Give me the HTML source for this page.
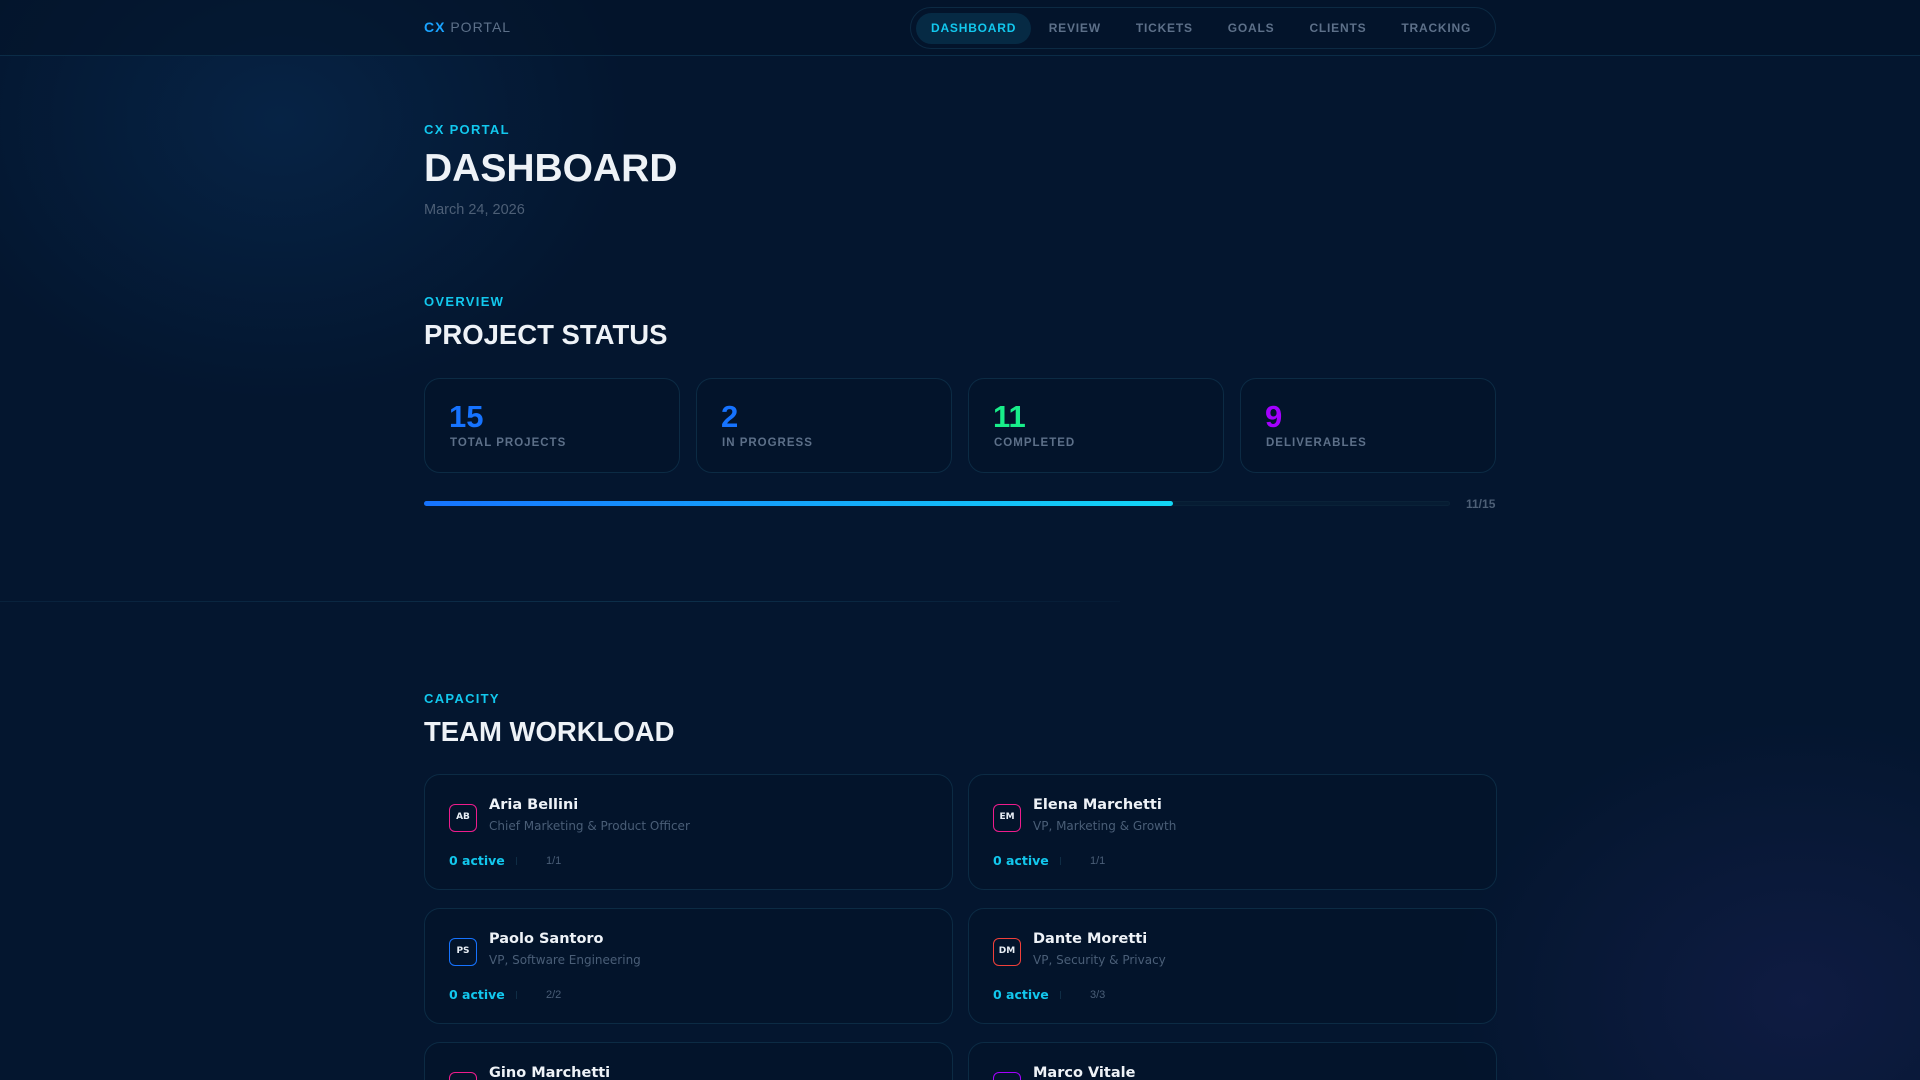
<!DOCTYPE html>
<html><head><meta charset="utf-8"><style>
*{margin:0;padding:0;box-sizing:border-box}
html,body{width:1920px;height:1080px;overflow:hidden}
body{font-family:"Liberation Sans",sans-serif;position:relative;
background:radial-gradient(ellipse 500px 400px at 280px 120px,rgba(10,60,110,.35),transparent 70%),radial-gradient(ellipse 500px 400px at 1800px 1000px,rgba(40,40,110,.3),transparent 70%),#04162f}
.wrap{position:absolute;left:0;top:0;width:1920px;height:1080px;overflow:hidden}
.hdr{position:absolute;left:0;top:0;width:1920px;height:56px;border-bottom:1px solid #0b2c47;background:rgba(3,20,42,.6)}
.logo{position:absolute;left:424px;top:19px;font-size:14px;letter-spacing:1px;color:#5d7089}
.logo b{color:#1aa3ff}
.nav{position:absolute;left:910px;top:7px;width:586px;height:42px;border:1px solid #0c2a43;border-radius:21px;display:flex;align-items:center;padding-left:5px}
.nav span{font-size:12px;font-weight:700;letter-spacing:.8px;color:#5d7089;padding:0 17.5px;height:31px;line-height:31px;border-radius:16px}
.nav span.a{background:#062a44;color:#12c8ee;padding:0 15px}
.ab{position:absolute;left:424px}
.lbl{font-size:13px;font-weight:700;letter-spacing:1.3px;color:#12c8ee}
h1{font-size:39px;font-weight:700;color:#eef2f7}
h2{font-size:27.5px;font-weight:700;color:#eef2f7}
.card{position:absolute;border:1px solid #0c2b44;border-radius:16px;background:rgba(2,18,40,.5)}
.stat{top:378px;width:256px;height:95px}
.stat .n{position:absolute;left:24px;top:20px;font-size:31px;font-weight:700}
.stat .l{position:absolute;left:25px;top:58px;font-size:11.5px;font-weight:700;letter-spacing:1px;color:#5d7089}
.mem{width:529px;height:116px}
.av{position:absolute;left:24px;top:29px;width:28px;height:28px;border:1.5px solid;border-radius:6px;color:#e8eef5;font:bold 9px "DejaVu Sans",sans-serif;text-align:center;line-height:25px}
.nm{position:absolute;left:64px;top:22px;font:bold 14.5px "DejaVu Sans",sans-serif;color:#eef2f7}
.rl{position:absolute;left:64px;top:44px;font:12px "DejaVu Sans",sans-serif;color:#4a5e77}
.ac{position:absolute;left:24px;top:78px;font:bold 12.5px "DejaVu Sans",sans-serif;color:#12c8ee}
.sep{position:absolute;left:91px;top:82px;width:1px;height:8px;background:#0f2d45}
.fr{position:absolute;left:121px;top:80px;font-size:11px;color:#4a5e77}
</style></head><body><div class="wrap">
<div class="hdr"><div class="logo"><b>CX</b> PORTAL</div>
<div class="nav"><span class="a">DASHBOARD</span><span>REVIEW</span><span>TICKETS</span><span>GOALS</span><span>CLIENTS</span><span>TRACKING</span></div></div>
<div class="ab lbl" style="top:122px">CX PORTAL</div>
<h1 class="ab" style="top:147px">DASHBOARD</h1>
<div class="ab" style="top:202px;font-size:14.5px;color:#4d5f76">March 24, 2026</div>
<div class="ab lbl" style="top:294px">OVERVIEW</div>
<h2 class="ab" style="top:319px">PROJECT STATUS</h2>
<div class="card stat" style="left:424px"><div class="n" style="color:#1673ff">15</div><div class="l">TOTAL PROJECTS</div></div>
<div class="card stat" style="left:696px"><div class="n" style="color:#1673ff">2</div><div class="l">IN PROGRESS</div></div>
<div class="card stat" style="left:968px"><div class="n" style="color:#18ee8a">11</div><div class="l">COMPLETED</div></div>
<div class="card stat" style="left:1240px"><div class="n" style="color:#a400ff">9</div><div class="l">DELIVERABLES</div></div>
<div style="position:absolute;left:424px;top:501px;width:1026px;height:5px;border-radius:3px;background:#061c33;border:1px solid #0a2238"></div>
<div style="position:absolute;left:424px;top:501px;width:749px;height:5px;border-radius:3px;background:linear-gradient(90deg,#1673ff,#12d6f5)"></div>
<div style="position:absolute;left:1466px;top:497px;font-size:12px;font-weight:700;color:#4d5f76">11/15</div>
<div style="position:absolute;left:0;top:601px;width:1120px;height:1px;background:linear-gradient(90deg,rgba(20,60,90,.3),#0d2f4a 60%,rgba(13,47,74,.2))"></div>
<div class="ab lbl" style="top:691px">CAPACITY</div>
<h2 class="ab" style="top:716px">TEAM WORKLOAD</h2>
<div class="card mem" style="left:424px;top:774px"><div class="av" style="border-color:#ee1c8c">AB</div><div class="nm">Aria Bellini</div><div class="rl">Chief Marketing &amp; Product Officer</div><div class="ac">0 active</div><div class="sep"></div><div class="fr">1/1</div></div>
<div class="card mem" style="left:968px;top:774px"><div class="av" style="border-color:#ee1c8c">EM</div><div class="nm">Elena Marchetti</div><div class="rl">VP, Marketing &amp; Growth</div><div class="ac">0 active</div><div class="sep"></div><div class="fr">1/1</div></div>
<div class="card mem" style="left:424px;top:908px"><div class="av" style="border-color:#1673ff">PS</div><div class="nm">Paolo Santoro</div><div class="rl">VP, Software Engineering</div><div class="ac">0 active</div><div class="sep"></div><div class="fr">2/2</div></div>
<div class="card mem" style="left:968px;top:908px"><div class="av" style="border-color:#f0403a">DM</div><div class="nm">Dante Moretti</div><div class="rl">VP, Security &amp; Privacy</div><div class="ac">0 active</div><div class="sep"></div><div class="fr">3/3</div></div>
<div class="card mem" style="left:424px;top:1042px"><div class="av" style="border-color:#ee1c8c"></div><div class="nm">Gino Marchetti</div></div>
<div class="card mem" style="left:968px;top:1042px"><div class="av" style="border-color:#a400ff"></div><div class="nm">Marco Vitale</div></div>
</div></body></html>
